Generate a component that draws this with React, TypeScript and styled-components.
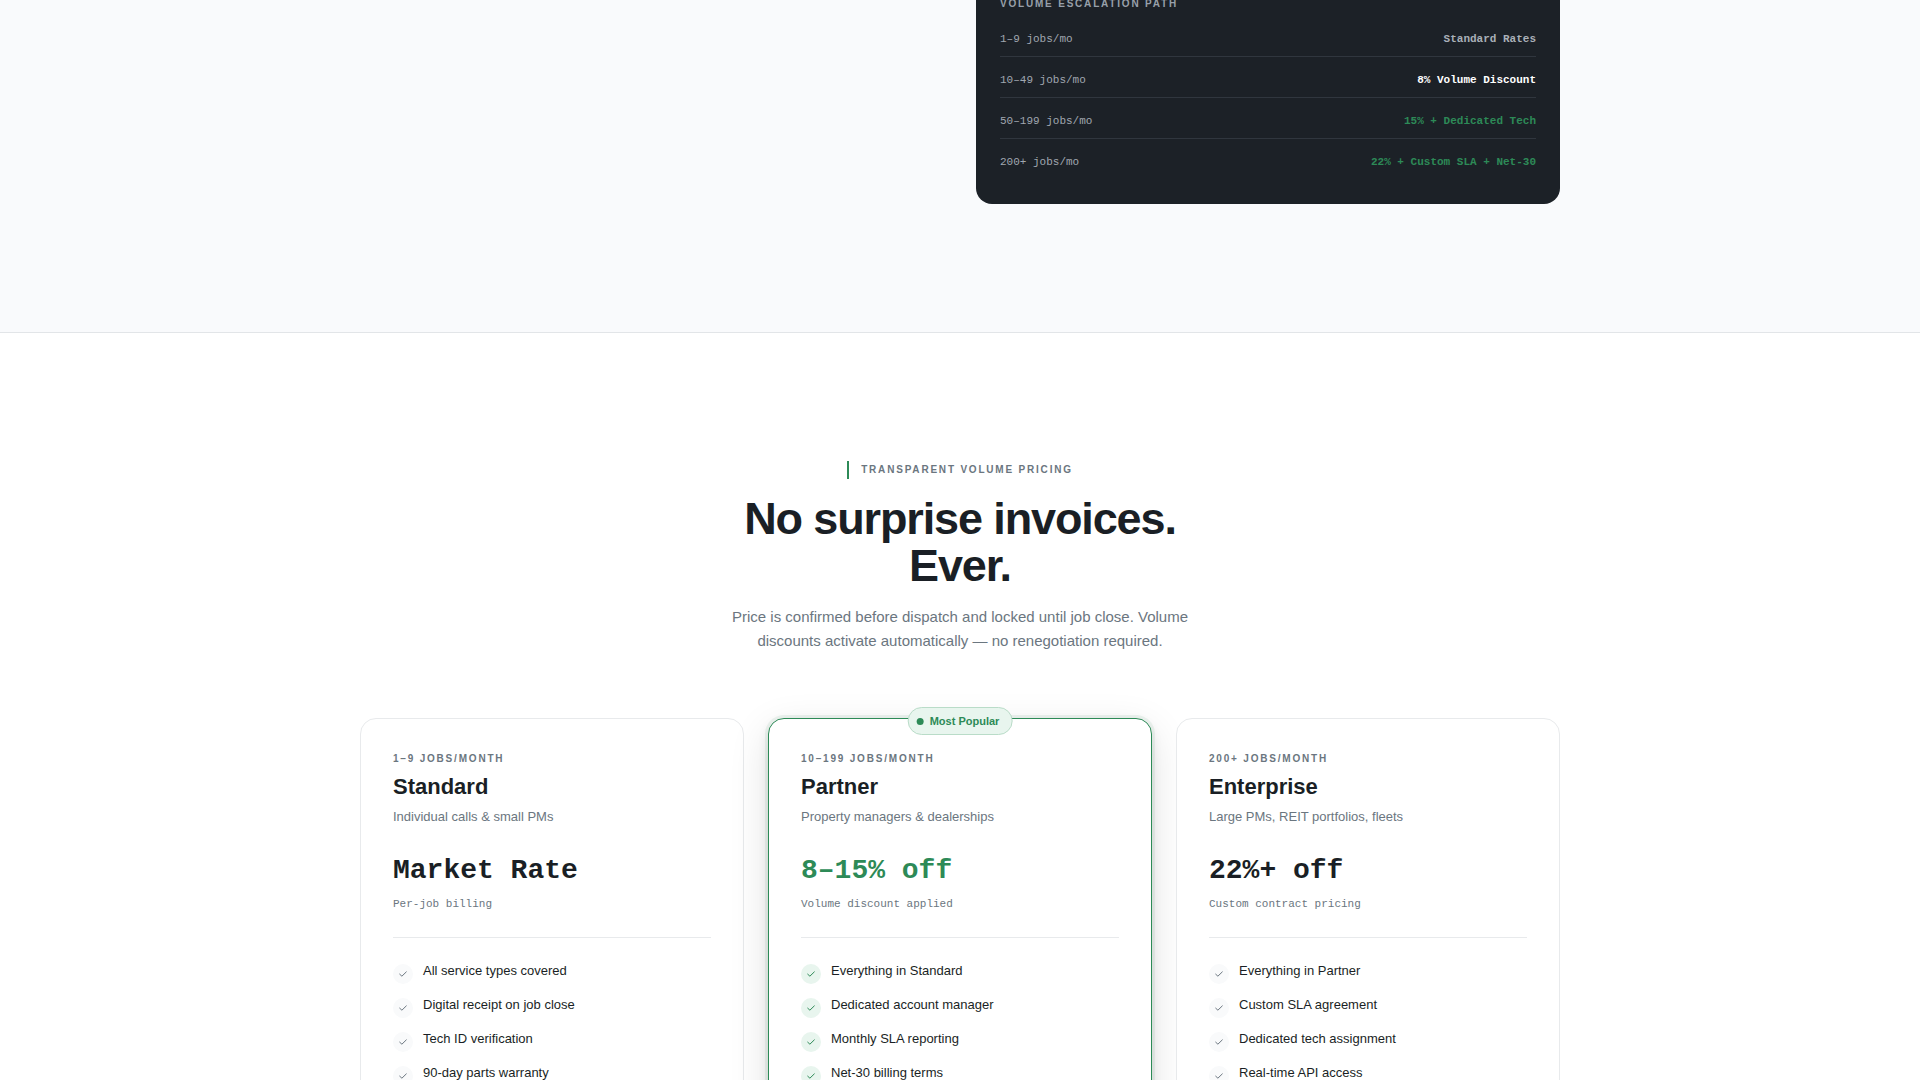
import React from "react";
import styled, { createGlobalStyle } from "styled-components";

const ink = "#1a1f25";
const muted = "#6b7680";
const green = "#2d8a57";
const mint = "#e8f5ee";
const line = "#e8eaec";
const sans = `"Liberation Sans", Arial, sans-serif`;
const mono = `"Liberation Mono", "Courier New", monospace`;

const GlobalStyle = createGlobalStyle`
  *, *::before, *::after { box-sizing: border-box; }
  body { margin: 0; background: #ffffff; color: ${ink}; font-family: ${sans}; }
  h2, h3, p, ul, dl, dd { margin: 0; padding: 0; }
`;

const Page = styled.main`
  height: 100vh;
  overflow-y: auto;
  scrollbar-width: none;
`;

const Container = styled.div`
  max-width: 1200px;
  margin: 0 auto;
`;

const VolumeSection = styled.section`
  padding-bottom: 128px;
  background: #f9fafc;
  border-bottom: 1px solid #e2e5e8;
`;

const TwoColumns = styled(Container)`
  display: grid;
  grid-template-columns: 1fr 1fr;
  gap: 32px;
`;

const DarkCard = styled.aside`
  grid-column: 2;
  padding: 0 24px 24px;
  border-radius: 0 0 16px 16px;
  background: #1c2127;
`;

const Overline = styled.p`
  font-size: 10px;
  line-height: 16px;
  font-weight: 700;
  letter-spacing: 0.18em;
  text-transform: uppercase;
  color: ${muted};
`;

const DarkTitle = styled(Overline)`
  margin-bottom: 15px;
  line-height: 8px;
  color: #98a0aa;
`;

const Tiers = styled.dl`
  display: grid;
  gap: 7px;
`;

const Tier = styled.div`
  display: flex;
  justify-content: space-between;
  padding: 8px 0;
  border-bottom: 1px solid #30363e;
  font-family: ${mono};
  font-size: 11px;
  line-height: 17px;
  &:last-child { border-bottom-color: transparent; }
`;

const TierRange = styled.dt`
  color: #a0a7b0;
`;

const TierRate = styled.dd<{ $color: string }>`
  font-weight: 700;
  color: ${(p) => p.$color};
`;

const PricingSection = styled.section`
  padding: 128px 0;
`;

const Header = styled.header`
  display: flex;
  flex-direction: column;
  align-items: center;
  max-width: 480px;
  margin: 0 auto 65px;
  text-align: center;
`;

const Eyebrow = styled(Overline)`
  margin-bottom: 16px;
  padding-left: 12px;
  border-left: 2px solid ${green};
  line-height: 18px;
`;

const Title = styled.h2`
  margin-bottom: 16px;
  font-size: 45px;
  line-height: 47px;
  font-weight: 700;
  letter-spacing: -0.025em;
`;

const Lead = styled.p`
  font-size: 15px;
  line-height: 24px;
  color: ${muted};
`;

const Plans = styled(Container)`
  display: grid;
  grid-template-columns: repeat(3, 1fr);
  gap: 24px;
`;

const PlanCard = styled.article<{ $featured?: boolean }>`
  position: relative;
  padding: 32px;
  border: 1px solid ${(p) => (p.$featured ? green : line)};
  border-radius: 16px;
  background: #ffffff;
  box-shadow: ${(p) =>
    p.$featured
      ? "0 0 0 3px rgba(46, 139, 87, 0.08), 0 4px 12px rgba(0, 0, 0, 0.08), 0 12px 40px rgba(0, 0, 0, 0.12)"
      : "none"};
`;

const Badge = styled.span`
  position: absolute;
  top: -12px;
  left: 50%;
  transform: translateX(-50%);
  display: flex;
  align-items: center;
  gap: 6px;
  padding: 4px 12px 4px 8px;
  border: 1px solid #b9dcc8;
  border-radius: 14px;
  background: ${mint};
  color: ${green};
  font-size: 11px;
  line-height: 18px;
  font-weight: 700;
  white-space: nowrap;
`;

const Dot = styled.span`
  width: 7px;
  height: 7px;
  border-radius: 50%;
  background: ${green};
`;

const PlanName = styled.h3`
  margin: 6px 0;
  font-size: 22px;
  line-height: 27px;
`;

const PlanNote = styled.p`
  margin-bottom: 28px;
  font-size: 13px;
  line-height: 21px;
  color: ${muted};
`;

const Price = styled.p<{ $featured?: boolean }>`
  margin-bottom: 8px;
  font-family: ${mono};
  font-size: 28px;
  line-height: 32px;
  font-weight: 700;
  color: ${(p) => (p.$featured ? green : ink)};
`;

const PriceNote = styled.p`
  padding-bottom: 24px;
  border-bottom: 1px solid ${line};
  font-family: ${mono};
  font-size: 11px;
  line-height: 18px;
  color: ${muted};
`;

const Features = styled.ul`
  display: grid;
  gap: 12px;
  padding-top: 24px;
  list-style: none;
`;

const Feature = styled.li`
  display: flex;
  align-items: flex-start;
  gap: 10px;
  font-size: 13px;
  line-height: 18px;
`;

const CheckCircle = styled.span<{ $featured?: boolean }>`
  display: grid;
  place-items: center;
  flex: none;
  width: 20px;
  height: 20px;
  margin-top: 2px;
  border-radius: 50%;
  background: ${(p) => (p.$featured ? mint : "#f9fafb")};
  color: ${(p) => (p.$featured ? green : muted)};
`;

const Check = () => (
  <svg width="10" height="10" viewBox="0 0 10 10" fill="none" aria-hidden="true">
    <path d="M1.7 5.2L3.9 7.2L8.3 2.9" stroke="currentColor" strokeWidth="1" strokeLinecap="round" strokeLinejoin="round" />
  </svg>
);

const tiers = [
  { range: "1–9 jobs/mo", rate: "Standard Rates", color: "#a9b0b8" },
  { range: "10–49 jobs/mo", rate: "8% Volume Discount", color: "#ffffff" },
  { range: "50–199 jobs/mo", rate: "15% + Dedicated Tech", color: green },
  { range: "200+ jobs/mo", rate: "22% + Custom SLA + Net-30", color: green },
];

const plans = [
  {
    volume: "1–9 jobs/month",
    name: "Standard",
    note: "Individual calls & small PMs",
    price: "Market Rate",
    priceNote: "Per-job billing",
    features: ["All service types covered", "Digital receipt on job close", "Tech ID verification", "90-day parts warranty"],
  },
  {
    volume: "10–199 jobs/month",
    name: "Partner",
    note: "Property managers & dealerships",
    price: "8–15% off",
    priceNote: "Volume discount applied",
    featured: true,
    features: ["Everything in Standard", "Dedicated account manager", "Monthly SLA reporting", "Net-30 billing terms"],
  },
  {
    volume: "200+ jobs/month",
    name: "Enterprise",
    note: "Large PMs, REIT portfolios, fleets",
    price: "22%+ off",
    priceNote: "Custom contract pricing",
    features: ["Everything in Partner", "Custom SLA agreement", "Dedicated tech assignment", "Real-time API access"],
  },
];

export default function App() {
  return (
    <>
      <GlobalStyle />
      <Page>
        <VolumeSection>
          <TwoColumns>
            <DarkCard>
              <DarkTitle>Volume Escalation Path</DarkTitle>
              <Tiers>
                {tiers.map((t) => (
                  <Tier key={t.range}>
                    <TierRange>{t.range}</TierRange>
                    <TierRate $color={t.color}>{t.rate}</TierRate>
                  </Tier>
                ))}
              </Tiers>
            </DarkCard>
          </TwoColumns>
        </VolumeSection>
        <PricingSection>
          <Header>
            <Eyebrow>Transparent Volume Pricing</Eyebrow>
            <Title>No surprise invoices. Ever.</Title>
            <Lead>
              Price is confirmed before dispatch and locked until job close. Volume discounts activate automatically — no
              renegotiation required.
            </Lead>
          </Header>
          <Plans>
            {plans.map((p) => (
              <PlanCard key={p.name} $featured={p.featured}>
                {p.featured && (
                  <Badge>
                    <Dot />
                    Most Popular
                  </Badge>
                )}
                <Overline>{p.volume}</Overline>
                <PlanName>{p.name}</PlanName>
                <PlanNote>{p.note}</PlanNote>
                <Price $featured={p.featured}>{p.price}</Price>
                <PriceNote>{p.priceNote}</PriceNote>
                <Features>
                  {p.features.map((f) => (
                    <Feature key={f}>
                      <CheckCircle $featured={p.featured}>
                        <Check />
                      </CheckCircle>
                      {f}
                    </Feature>
                  ))}
                </Features>
              </PlanCard>
            ))}
          </Plans>
        </PricingSection>
      </Page>
    </>
  );
}
